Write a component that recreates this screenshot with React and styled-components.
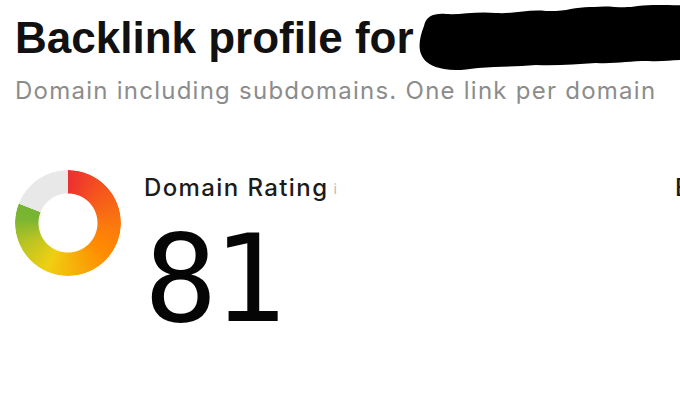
import React from "react";
import styled, { createGlobalStyle } from "styled-components";

const Global = createGlobalStyle`
  html, body { margin: 0; padding: 0; background: #ffffff; }
  body { width: 680px; height: 415px; overflow: hidden; font-family: Inter, "Liberation Sans", sans-serif; }
`;

const Page = styled.div`
  padding: 13px 0 0 15px;
  box-sizing: border-box;
  width: 680px;
  height: 415px;
  overflow: hidden;
`;

const Heading = styled.h1`
  position: relative;
  margin: 0;
  font-family: "Liberation Sans", Arial, sans-serif;
  font-weight: 700;
  font-size: 44px;
  line-height: 50px;
  color: #111111;
  white-space: nowrap;
`;

const Redaction = styled.svg`
  position: absolute;
  left: 401px;
  top: -11px;
  width: 270px;
  height: 68px;
  overflow: visible;
`;

const Subtitle = styled.p`
  margin: 13px 0 0;
  font-family: Inter, "Liberation Sans", sans-serif;
  font-size: 24px;
  line-height: 30px;
  color: #8c8c8c;
  letter-spacing: 1.25px;
  white-space: nowrap;
`;

const Row = styled.div`
  display: flex;
  margin-top: 64px;
`;

const Metric = styled.div`
  display: flex;
  gap: 23px;
  flex: 0 0 ${(p) => p.$width}px;
`;

const Donut = styled.div`
  width: 106px;
  height: 106px;
  border-radius: 50%;
  flex: none;
  background: conic-gradient(
    #ec2f31 0deg,
    #f4511f 40deg,
    #fb7a0c 95deg,
    #ff8c00 130deg,
    #f6b30a 175deg,
    #f0cf12 205deg,
    #b9c423 245deg,
    #7cb531 275deg,
    #76b432 291deg,
    #e8e8e8 291.6deg,
    #e8e8e8 360deg
  );
  -webkit-mask: radial-gradient(circle, transparent 29px, #000 30px);
  mask: radial-gradient(circle, transparent 29px, #000 30px);
`;

const Body = styled.div`
  display: flex;
  flex-direction: column;
  padding-top: 3px;
`;

const Label = styled.div`
  font-family: Inter, "Liberation Sans", sans-serif;
  font-weight: 500;
  font-size: 24px;
  line-height: 30px;
  color: #1b1b1b;
  letter-spacing: 1.4px;
  white-space: nowrap;
  display: flex;
  align-items: flex-start;
`;

const Info = styled.span`
  font-size: 14px;
  line-height: 14px;
  color: #b8b8b8;
  margin-left: 5px;
  margin-top: 9px;
  font-weight: 400;
  letter-spacing: 0;
`;

const Value = styled.div`
  margin-top: 15px;
  font-family: "DejaVu Sans Mono", "Liberation Mono", monospace;
  font-size: 122px;
  line-height: 1;
  color: #050505;
  letter-spacing: -5px;
`;

export default function App() {
  return (
    <>
      <Global />
      <Page>
        <Heading>
          Backlink profile for
          <Redaction viewBox="0 0 270 68" aria-hidden="true">
            <path
              d="M8 24 C10 14 18 11 30 12 C45 13 60 9 80 11 C100 12 112 7 130 9 C150 10 160 4 178 5 C195 3 205 7 222 4 C240 2 255 4 280 3 L280 58 C262 57 250 60 232 59 C212 59 200 62 180 61 C160 62 142 64 120 63 C100 65 82 64 62 66 C48 68 38 69 28 67 C16 65 8 60 5 52 C2 44 4 34 8 24 Z"
              fill="#000"
            />
          </Redaction>
        </Heading>
        <Subtitle>Domain including subdomains. One link per domain</Subtitle>
        <Row>
          <Metric $width={660}>
            <Donut />
            <Body>
              <Label>
                Domain Rating<Info>i</Info>
              </Label>
              <Value>81</Value>
            </Body>
          </Metric>
          <Metric $width={200}>
            <Body>
              <Label>Backlinks</Label>
            </Body>
          </Metric>
        </Row>
      </Page>
    </>
  );
}
